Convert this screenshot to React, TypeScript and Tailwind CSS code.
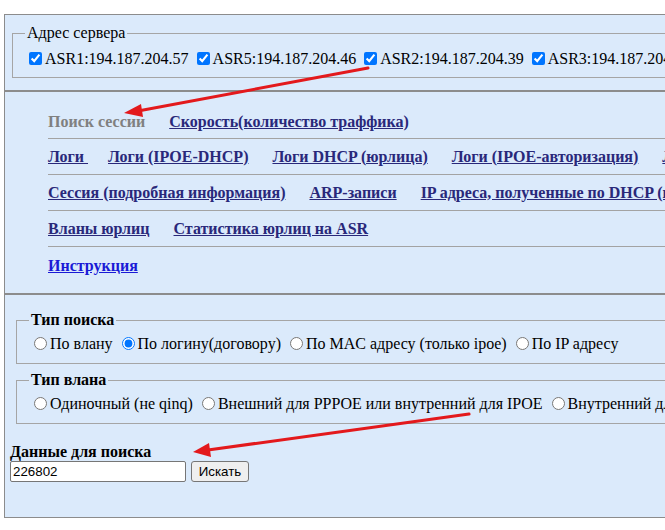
export default function App() {
  const servers = [
    "ASR1:194.187.204.57",
    "ASR5:194.187.204.46",
    "ASR2:194.187.204.39",
    "ASR3:194.187.204.40",
  ];
  const visited = "font-bold underline text-[#29287a] whitespace-nowrap";
  return (
    <div className="relative w-[665px] h-[530px] overflow-hidden bg-white [font-family:Liberation_Serif,Times_New_Roman,serif] text-[16px] leading-[normal] text-black">
      <div className="pt-[14px] pl-[4px]">
        <div className="w-[1000px]">
          {/* Panel 1: server addresses */}
          <div className="h-[77px] border border-[#8c8c8c] bg-[#dbeafb] pt-[9px] pl-[7px]">
            <fieldset className="w-[960px] border border-[#a5a5a5] px-3 pt-[7px] pb-[9px]">
              <legend className="px-[2px]">Адрес сервера</legend>
              <div className="whitespace-nowrap">
                {servers.map((s) => (
                  <span key={s} className="mr-[4px]">
                    <input
                      type="checkbox"
                      defaultChecked
                      className="m-[3px_3px_3px_4px] align-[-1px]"
                    />
                    {s}
                  </span>
                ))}
              </div>
            </fieldset>
          </div>

          {/* Panel 2: navigation */}
          <div className="h-[203px] border border-[#8c8c8c] bg-[#dbeafb] pt-[13px] pl-[43px]">
            <div className="flex h-[34px] items-center gap-[24px] border-b border-[#a3a3a3] whitespace-nowrap">
              <span className="font-bold text-[#808080]">Поиск сессии</span>
              <a className={visited}>Скорость(количество траффика)</a>
            </div>
            <div className="flex h-[36px] items-center gap-[24px] border-b border-[#a3a3a3] whitespace-nowrap">
              <a className={`${visited} mr-[-4px]`}>Логи&nbsp;</a>
              <a className={visited}>Логи (IPOE-DHCP)</a>
              <a className={visited}>Логи DHCP (юрлица)</a>
              <a className={visited}>Логи (IPOE-авторизация)</a>
              <a className={visited}>Логи (PPPoE)</a>
            </div>
            <div className="flex h-[36px] items-center gap-[24px] border-b border-[#a3a3a3] whitespace-nowrap">
              <a className={visited}>Сессия (подробная информация)</a>
              <a className={visited}>ARP-записи</a>
              <a className={visited}>IP адреса, полученные по DHCP (юрлица)</a>
            </div>
            <div className="flex h-[36px] items-center gap-[24px] border-b border-[#a3a3a3] whitespace-nowrap">
              <a className={visited}>Вланы юрлиц</a>
              <a className={visited}>Статистика юрлиц на ASR</a>
            </div>
            <div className="flex h-[37px] items-center gap-[24px] whitespace-nowrap">
              <a className="font-bold underline text-[#1a1ad6]">Инструкция</a>
            </div>
          </div>

          {/* Panel 3: search form */}
          <div className="h-[224px] border border-[#8c8c8c] bg-[#dbeafb] pt-[16px] pl-[5px]">
            <fieldset className="ml-[6px] w-[960px] border border-[#a5a5a5] px-3 pt-[5px] pb-[10px]">
              <legend className="px-[2px] font-bold">Тип поиска</legend>
              <div className="whitespace-nowrap">
                <label className="mr-[4px]">
                  <input type="radio" name="st" className="m-[3px_3px_0_5px] align-[-1px]" />
                  По влану
                </label>
                <label className="mr-[4px]">
                  <input type="radio" name="st" defaultChecked className="m-[3px_3px_0_5px] align-[-1px]" />
                  По логину(договору)
                </label>
                <label className="mr-[4px]">
                  <input type="radio" name="st" className="m-[3px_3px_0_5px] align-[-1px]" />
                  По MAC адресу (только ipoe)
                </label>
                <label className="mr-[4px]">
                  <input type="radio" name="st" className="m-[3px_3px_0_5px] align-[-1px]" />
                  По IP адресу
                </label>
              </div>
            </fieldset>
            <fieldset className="ml-[6px] mt-[7px] w-[960px] border border-[#a5a5a5] px-3 pt-[5px] pb-[10px]">
              <legend className="px-[2px] font-bold">Тип влана</legend>
              <div className="whitespace-nowrap">
                <label className="mr-[4px]">
                  <input type="radio" name="vt" className="m-[3px_3px_0_5px] align-[-1px]" />
                  Одиночный (не qinq)
                </label>
                <label className="mr-[4px]">
                  <input type="radio" name="vt" className="m-[3px_3px_0_5px] align-[-1px]" />
                  Внешний для PPPOE или внутренний для IPOE
                </label>
                <label className="mr-[4px]">
                  <input type="radio" name="vt" className="m-[3px_3px_0_5px] align-[-1px]" />
                  Внутренний для PPPOE
                </label>
              </div>
            </fieldset>
            <div className="mt-[19px] font-bold">Данные для поиска</div>
            <div className="flex items-center gap-[5px]">
              <input
                type="text"
                defaultValue="226802"
                className="h-[21px] w-[176px] rounded-[2px] border border-[#767676] bg-white px-[2px] [font-family:Liberation_Sans,Arial,sans-serif] text-[13.333px] text-black"
              />
              <button className="h-[21px] w-[58px] rounded-[3px] border border-[#767676] bg-[#efefef] [font-family:Liberation_Sans,Arial,sans-serif] text-[13.333px] text-black">
                Искать
              </button>
            </div>
          </div>
        </div>
      </div>

      {/* Annotation arrows */}
      <svg
        className="pointer-events-none absolute left-0 top-0"
        width="665"
        height="530"
        viewBox="0 0 665 530"
      >
        <line x1="368" y1="68" x2="138" y2="111" stroke="#e3191c" strokeWidth="3" strokeLinecap="round" />
        <polygon points="124,113 141,104 143,117" fill="#e3191c" />
        <line x1="469" y1="414" x2="208" y2="450" stroke="#e3191c" strokeWidth="3" strokeLinecap="round" />
        <polygon points="193,452 209,443 211,457" fill="#e3191c" />
      </svg>
    </div>
  );
}
